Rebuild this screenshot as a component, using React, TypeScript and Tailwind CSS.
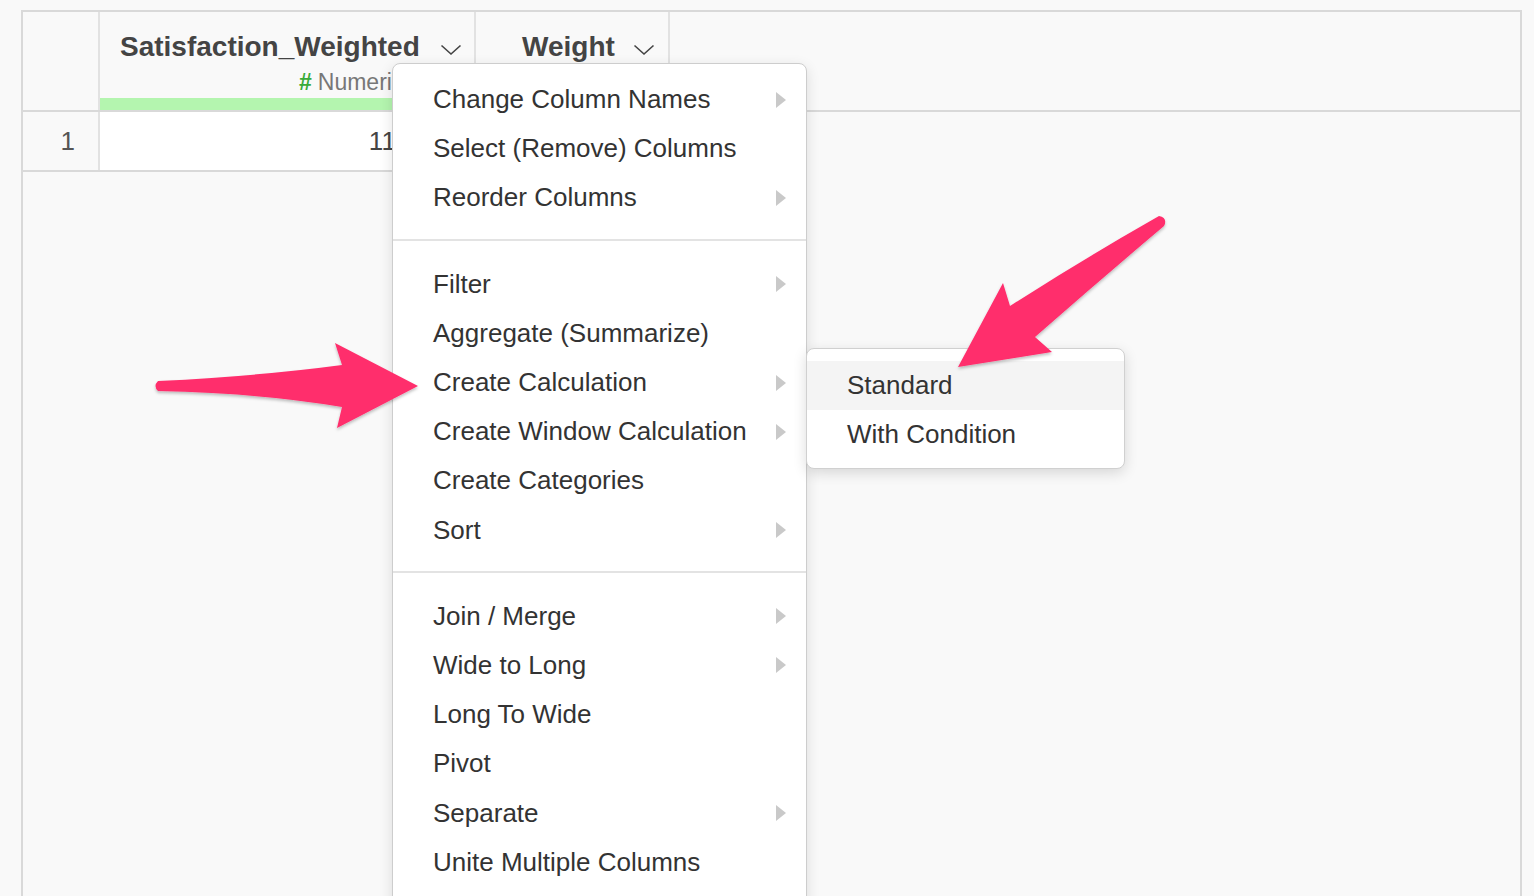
import React from 'react';

const font = {fontFamily: '"Liberation Sans", Arial, Helvetica, sans-serif'};

const Chevron: React.FC = () => (
    <svg width="22" height="12" viewBox="0 0 22 12" className="mb-[5px] shrink-0">
        <path d="M1.5 1.5 L11 10 L20.5 1.5" fill="none" stroke="#444" strokeWidth="1.6"/>
    </svg>
);

const SubArrow: React.FC = () => (
    <svg width="10" height="16" viewBox="0 0 10 16" className="shrink-0">
        <path d="M0 0 L10 8 L0 16 Z" fill="#c9c9c9"/>
    </svg>
);

type Item = { label: string; sub?: boolean };

const groups: Item[][] = [
    [
        {label: 'Change Column Names', sub: true},
        {label: 'Select (Remove) Columns'},
        {label: 'Reorder Columns', sub: true},
    ],
    [
        {label: 'Filter', sub: true},
        {label: 'Aggregate (Summarize)'},
        {label: 'Create Calculation', sub: true},
        {label: 'Create Window Calculation', sub: true},
        {label: 'Create Categories'},
        {label: 'Sort', sub: true},
    ],
    [
        {label: 'Join / Merge', sub: true},
        {label: 'Wide to Long', sub: true},
        {label: 'Long To Wide'},
        {label: 'Pivot'},
        {label: 'Separate', sub: true},
        {label: 'Unite Multiple Columns'},
    ],
];

const App: React.FC = () => {
    return (
        <div className="relative h-[896px] w-full overflow-hidden bg-[#f9f9f9]" style={font}>
            {/* table frame */}
            <div className="pt-[10px] pl-[21px] pr-[12px]">
                <div className="h-[900px] border-2 border-b-0 border-[#d9d9d9] bg-[#f9f9f9]">
                    {/* header row */}
                    <div className="flex h-[100px] border-b-2 border-[#d9d9d9]">
                        <div className="w-[77px] border-r-2 border-[#e2e2e2]"/>
                        <div className="flex w-[376px] flex-col border-r-2 border-[#e2e2e2]">
                            <div className="flex h-[49px] items-end gap-[20px] pl-[20px]">
                                <span className="text-[28px] font-bold leading-none text-[#444]">Satisfaction_Weighted</span>
                                <Chevron/>
                            </div>
                            <div className="flex h-[37px] items-center pt-[5px] pl-[199px] text-[23px] text-[#777]">
                                <span className="mr-[6px] font-bold text-[#3aab3a]">#</span>
                                <span>Numeric</span>
                            </div>
                            <div className="h-[12px] bg-[#b4f5af]"/>
                        </div>
                        <div className="flex w-[194px] border-r-2 border-[#e2e2e2]">
                            <div className="flex h-[49px] items-end gap-[18px] pl-[46px]">
                                <span className="text-[28px] font-bold leading-none text-[#444]">Weight</span>
                                <Chevron/>
                            </div>
                        </div>
                    </div>
                    {/* data row */}
                    <div className="flex h-[60px] w-[647px] border-b-2 border-[#d9d9d9]">
                        <div className="flex w-[77px] items-center justify-end border-r-2 border-[#e2e2e2] pr-[23px] text-[26px] text-[#555]">1</div>
                        <div className="flex w-[376px] items-center justify-end border-r-2 border-[#e2e2e2] bg-white pr-[42px] text-[26px] text-[#444]">11.25</div>
                        <div className="w-[194px] bg-white"/>
                    </div>
                </div>
            </div>

            {/* main context menu */}
            <div className="absolute left-[392px] top-[63px] h-[860px] w-[415px] rounded-t-[8px] border border-[#cdcdcd] bg-white pt-[11px] shadow-[0_4px_14px_rgba(0,0,0,0.12)]">
                {groups.map((group, gi) => (
                    <div key={gi}>
                        {gi > 0 && <div className="mt-[16px] mb-[19px] h-[2px] bg-[#e3e3e3]"/>}
                        {group.map((item) => (
                            <div key={item.label} className="flex h-[49.2px] items-center justify-between pl-[40px] pr-[20px] text-[26px] text-[#333]">
                                <span>{item.label}</span>
                                {item.sub && <SubArrow/>}
                            </div>
                        ))}
                    </div>
                ))}
            </div>

            {/* submenu */}
            <div className="absolute left-[806px] top-[348px] h-[121px] w-[319px] rounded-[8px] border border-[#d0d0d0] bg-white pt-[12px] shadow-[0_4px_14px_rgba(0,0,0,0.14)]">
                <div className="flex h-[49px] items-center bg-[#f4f4f4] pl-[40px] text-[26px] text-[#333]">Standard</div>
                <div className="flex h-[49px] items-center pl-[40px] text-[26px] text-[#333]">With Condition</div>
            </div>

            {/* annotation arrows */}
            <svg className="pointer-events-none absolute left-0 top-0" width="1534" height="896" viewBox="0 0 1534 896">
                <defs>
                    <filter id="sh" x="-10%" y="-10%" width="120%" height="130%">
                        <feDropShadow dx="0" dy="2" stdDeviation="1.5" floodColor="#000" floodOpacity="0.25"/>
                    </filter>
                </defs>
                <path
                    d="M158,381 Q260,376 342,365 L335,343 L418,386 L337,428 L342,407 Q260,393 158,391 Q153,386 158,381 Z"
                    fill="#ff2d6c" filter="url(#sh)"
                />
                <path
                    d="M1159,216 Q1168,218 1164,226 Q1100,280 1035,337 L1052,352 L958,367 L1003,283 L1010,306 Q1085,258 1159,216 Z"
                    fill="#ff2d6c" filter="url(#sh)"
                />
            </svg>
        </div>
    );
};

export default App;
